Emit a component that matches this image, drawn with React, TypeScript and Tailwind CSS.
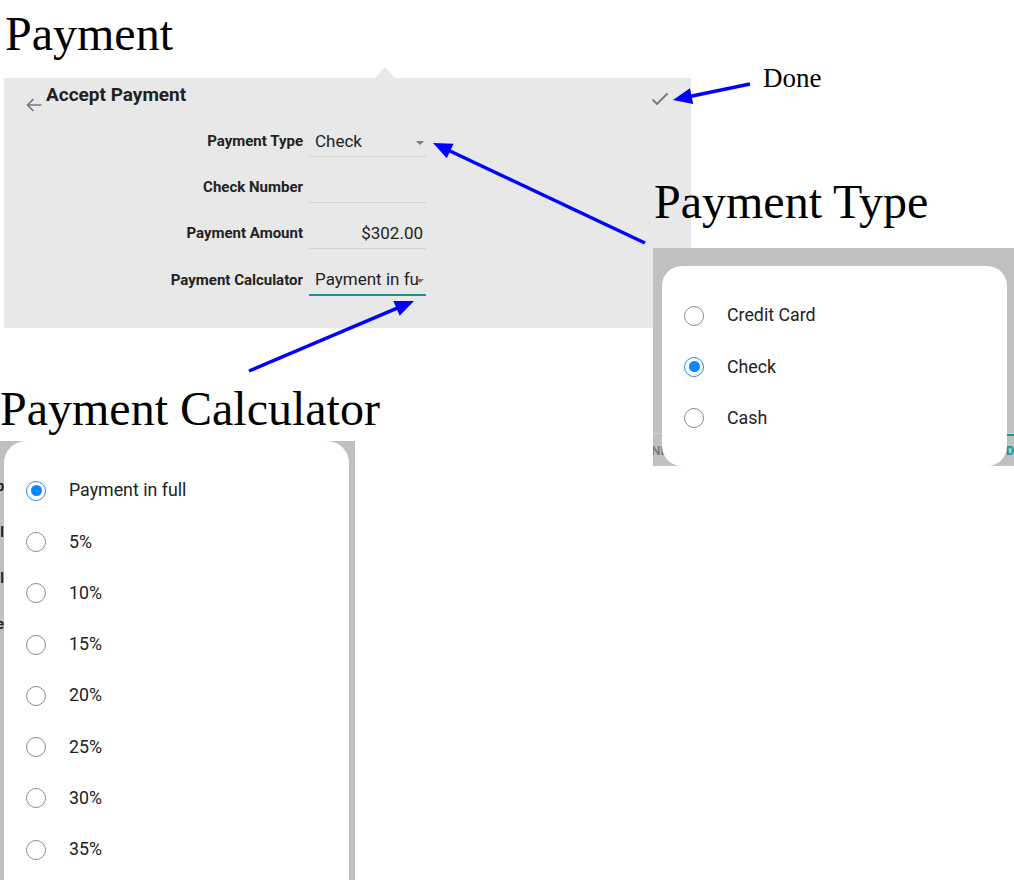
import React from "react";

function Radio({ checked }: { checked?: boolean }) {
  if (checked) {
    return (
      <span className="flex h-[20px] w-[20px] shrink-0 items-center justify-center rounded-full border-[1.5px] border-[#1a8cff]">
        <span className="h-[11px] w-[11px] rounded-full bg-[#0a84ff]" />
      </span>
    );
  }
  return <span className="h-[20px] w-[20px] shrink-0 rounded-full border border-[#8c8c8c]" />;
}

function OptionList({ items, selected }: { items: string[]; selected: string }) {
  return (
    <div className="flex flex-col pt-[24px] font-['Roboto',sans-serif]">
      {items.map((it) => (
        <div key={it} className="flex h-[51.3px] items-center pl-[22px]">
          <Radio checked={it === selected} />
          <span className="ml-[23px] text-[17.8px] text-[#222222]">{it}</span>
        </div>
      ))}
    </div>
  );
}

function Arrow({ x1, y1, x2, y2 }: { x1: number; y1: number; x2: number; y2: number }) {
  const dx = x2 - x1;
  const dy = y2 - y1;
  const L = Math.hypot(dx, dy);
  const ux = dx / L;
  const uy = dy / L;
  const hl = 19;
  const hw = 8;
  const bx = x2 - ux * hl;
  const by = y2 - uy * hl;
  const pts = `${x2},${y2} ${bx - uy * hw},${by + ux * hw} ${bx + uy * hw},${by - ux * hw}`;
  return (
    <g>
      <line x1={x1} y1={y1} x2={bx + ux * 2} y2={by + uy * 2} stroke="#0000ff" strokeWidth={3.5} />
      <polygon points={pts} fill="#0000ff" />
    </g>
  );
}

function Caret() {
  return (
    <span className="absolute right-[2px] top-1/2 h-0 w-0 -translate-y-[1px] border-l-[4px] border-r-[4px] border-t-[4px] border-l-transparent border-r-transparent border-t-[#7a7a7a]" />
  );
}

function FormRow({
  label,
  children,
  last,
  right,
}: {
  label: string;
  children?: React.ReactNode;
  last?: boolean;
  right?: boolean;
}) {
  return (
    <div className={`grid grid-cols-[299px_117px] items-end gap-x-[6px] ${last ? "h-[47px]" : "h-[46px]"}`}>
      <div className="flex h-[30px] items-center justify-end pb-[2px] text-[15px] font-bold text-[#222222]">
        {label}
      </div>
      <div
        className={`relative flex h-[30px] items-center overflow-hidden whitespace-nowrap text-[17px] text-[#222222] ${
          last ? "border-b-2 border-[#119a90]" : "border-b border-[#d2d2d2]"
        } ${right ? "justify-end pr-[3px]" : "pl-[6px]"}`}
      >
        {children}
      </div>
    </div>
  );
}

const heading = "font-['Liberation_Serif','Times_New_Roman',serif] text-[48px] leading-none text-black";

export default function App() {
  return (
    <div className="relative h-[880px] w-[1014px] overflow-hidden bg-white">
      {/* Left column: flows top to bottom */}
      <div className="flex flex-col items-start pt-[10px]">
        <div className={`ml-[5px] ${heading}`}>Payment</div>

        {/* Accept Payment panel */}
        <div className="relative ml-[4px] mt-[20px] h-[250px] w-[687px] bg-[#e8e8e8] font-['Roboto',sans-serif]">
          <span className="absolute left-[371px] top-[-11px] h-0 w-0 border-b-[11px] border-l-[10px] border-r-[10px] border-b-[#e8e8e8] border-l-transparent border-r-transparent" />
          <div className="flex h-[33px] items-start pl-[22px] pr-[22px] pt-[6px]">
            <svg width="16" height="16" viewBox="0 0 16 16" className="mt-[13px] shrink-0">
              <path d="M1.5 8 H15.5 M7.5 2 L1.5 8 L7.5 14" fill="none" stroke="#777777" strokeWidth="1.6" />
            </svg>
            <span className="ml-[4px] text-[19px] font-bold leading-[22px] text-[#222222]">Accept Payment</span>
            <div className="flex-1" />
            <svg width="18" height="14" viewBox="0 0 18 14" className="mt-[8px] shrink-0">
              <path d="M1.5 7.5 L6 12 L16.5 1.5" fill="none" stroke="#777777" strokeWidth="1.8" />
            </svg>
          </div>
          <div className="flex flex-col">
            <FormRow label="Payment Type">
              <span>Check</span>
              <Caret />
            </FormRow>
            <FormRow label="Check Number" />
            <FormRow label="Payment Amount" right>
              <span>$302.00</span>
            </FormRow>
            <FormRow label="Payment Calculator" last>
              <span className="block w-[105px] overflow-hidden">Payment in full</span>
              <Caret />
            </FormRow>
          </div>
        </div>

        <div className={`mt-[57px] ${heading}`}>Payment Calculator</div>

        {/* Payment Calculator dialog */}
        <div className="relative mt-[8px] h-[439px] w-[355px] overflow-hidden bg-[#c0c0c0] font-['Roboto',sans-serif]">
          <div className="flex w-[4px] flex-col items-end overflow-hidden pt-[36px] text-[14px] font-bold leading-[18px] text-[#222222]">
            <span className="h-[46px] whitespace-nowrap">p</span>
            <span className="h-[46px] whitespace-nowrap">l</span>
            <span className="h-[46px] whitespace-nowrap">l</span>
            <span className="h-[46px] whitespace-nowrap">e</span>
          </div>
          <div className="absolute left-[4px] top-0 h-[470px] w-[345px] rounded-t-[22px] bg-white">
            <OptionList
              items={["Payment in full", "5%", "10%", "15%", "20%", "25%", "30%", "35%"]}
              selected="Payment in full"
            />
          </div>
        </div>
      </div>

      {/* Annotation: Done */}
      <div className="absolute left-[763px] top-[65px] font-['Liberation_Serif','Times_New_Roman',serif] text-[27px] leading-none text-black">
        Done
      </div>

      {/* Right column: Payment Type heading + dialog */}
      <div className="absolute left-[653px] top-[178px] flex flex-col items-start">
        <div className={`ml-[1px] ${heading}`}>Payment Type</div>
        <div className="relative mt-[22px] flex h-[218px] w-[361px] flex-col justify-end overflow-hidden bg-[#c0c0c0] font-['Roboto',sans-serif]">
          <div className="flex h-[33px] flex-col border-t border-[#d4d4d4]">
            <div className="flex h-[2px] justify-end">
              <div className="w-[70px] bg-[#139a90]" />
            </div>
            <div className="flex flex-1 items-center justify-between overflow-hidden whitespace-nowrap text-[13px] font-bold">
              <span className="ml-[-9px] text-[#7b7b7b]">END</span>
              <span className="mr-[-12px] text-[#139a90]">ADD D</span>
            </div>
          </div>
          <div className="absolute left-[9px] top-[18px] h-[200px] w-[345px] rounded-[20px] bg-white">
            <OptionList items={["Credit Card", "Check", "Cash"]} selected="Check" />
          </div>
        </div>
      </div>

      {/* Annotation arrows */}
      <svg className="pointer-events-none absolute left-0 top-0" width="1014" height="880" viewBox="0 0 1014 880">
        <Arrow x1={750} y1={84} x2={673} y2={100} />
        <Arrow x1={645} y1={243} x2={433} y2={143} />
        <Arrow x1={249} y1={371} x2={414} y2={301} />
      </svg>
    </div>
  );
}
